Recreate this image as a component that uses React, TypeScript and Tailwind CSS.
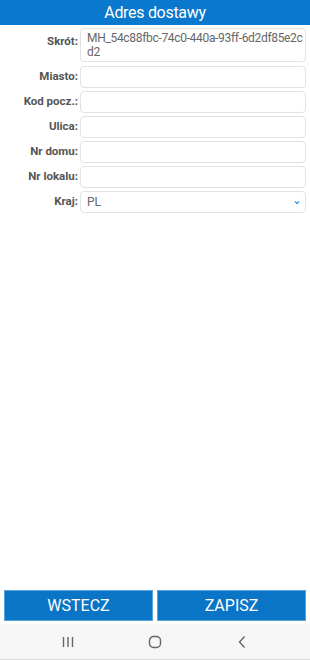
import React from 'react';

const fields = [
  { label: 'Miasto:', value: '' },
  { label: 'Kod pocz.:', value: '' },
  { label: 'Ulica:', value: '' },
  { label: 'Nr domu:', value: '' },
  { label: 'Nr lokalu:', value: '' },
];

const Label: React.FC<{ text: string; className?: string }> = ({ text, className }) => (
  <div className={`w-[78px] shrink-0 text-right text-[11.5px] font-bold text-[#555] ${className ?? ''}`}>{text}</div>
);

const App: React.FC = () => {
  return (
    <div className="flex h-[660px] w-[310px] flex-col bg-white" style={{ fontFamily: 'Roboto, "Noto Sans", sans-serif' }}>
      {/* Header */}
      <div className="flex h-[25px] shrink-0 items-center justify-center bg-[#0a78cc] text-[16px] tracking-[-0.3px] text-white">
        Adres dostawy
      </div>

      {/* Form */}
      <div className="flex flex-1 flex-col gap-[3px] pr-[4px] pt-[3px]">
        <div className="mb-[1px] flex items-start gap-[2px]">
          <Label text="Skrót:" className="pt-[5px]" />
          <div className="flex-1 rounded-[4px] border border-[#e2e2e2] py-[2px] pl-[6px] pr-[2px] text-[12px] leading-[14px] tracking-[-0.32px] text-[#666] break-all">
            MH_54c88fbc-74c0-440a-93ff-6d2df85e2cd2
          </div>
        </div>
        {fields.map((f) => (
          <div key={f.label} className="flex items-center gap-[2px]">
            <Label text={f.label} />
            <div className="h-[22px] flex-1 rounded-[4px] border border-[#e2e2e2]" />
          </div>
        ))}
        <div className="flex items-center gap-[2px]">
          <Label text="Kraj:" />
          <div className="flex h-[22px] flex-1 items-center justify-between rounded-[4px] border border-[#e2e2e2] pl-[6px] pr-[5px] text-[12px] text-[#666]">
            <span>PL</span>
            <svg width="6" height="5" viewBox="0 0 6 5" fill="none">
              <path d="M1 1.5 L3 3.5 L5 1.5" stroke="#3b9be0" strokeWidth="1.3" />
            </svg>
          </div>
        </div>
      </div>

      {/* Buttons */}
      <div className="flex shrink-0 gap-[4px] px-[4px] pb-[3px]">
        <button className="h-[31px] flex-1 border border-[#5aa4dc] bg-[#0a74c6] text-[16px] text-white">WSTECZ</button>
        <button className="h-[31px] flex-1 border border-[#5aa4dc] bg-[#0a74c6] text-[16px] text-white">ZAPISZ</button>
      </div>

      {/* Navigation bar */}
      <div className="flex h-[36px] shrink-0 items-center justify-center gap-[67px] border-b border-[#d8d8d8] bg-[#f6f6f6]">
        <div className="flex w-[20px] justify-center">
          <svg width="12" height="12" viewBox="0 0 12 12">
            <path d="M1.5 1 V11 M6 1 V11 M10.5 1 V11" stroke="#666" strokeWidth="1.4" />
          </svg>
        </div>
        <div className="flex w-[20px] justify-center">
          <svg width="14" height="14" viewBox="0 0 14 14">
            <rect x="1.5" y="1.5" width="11" height="11" rx="4" fill="none" stroke="#666" strokeWidth="1.4" />
          </svg>
        </div>
        <div className="flex w-[20px] justify-center">
          <svg width="10" height="14" viewBox="0 0 10 14">
            <path d="M7.5 1.5 L2.5 7 L7.5 12.5" fill="none" stroke="#666" strokeWidth="1.4" />
          </svg>
        </div>
      </div>
    </div>
  );
};

export default App;
